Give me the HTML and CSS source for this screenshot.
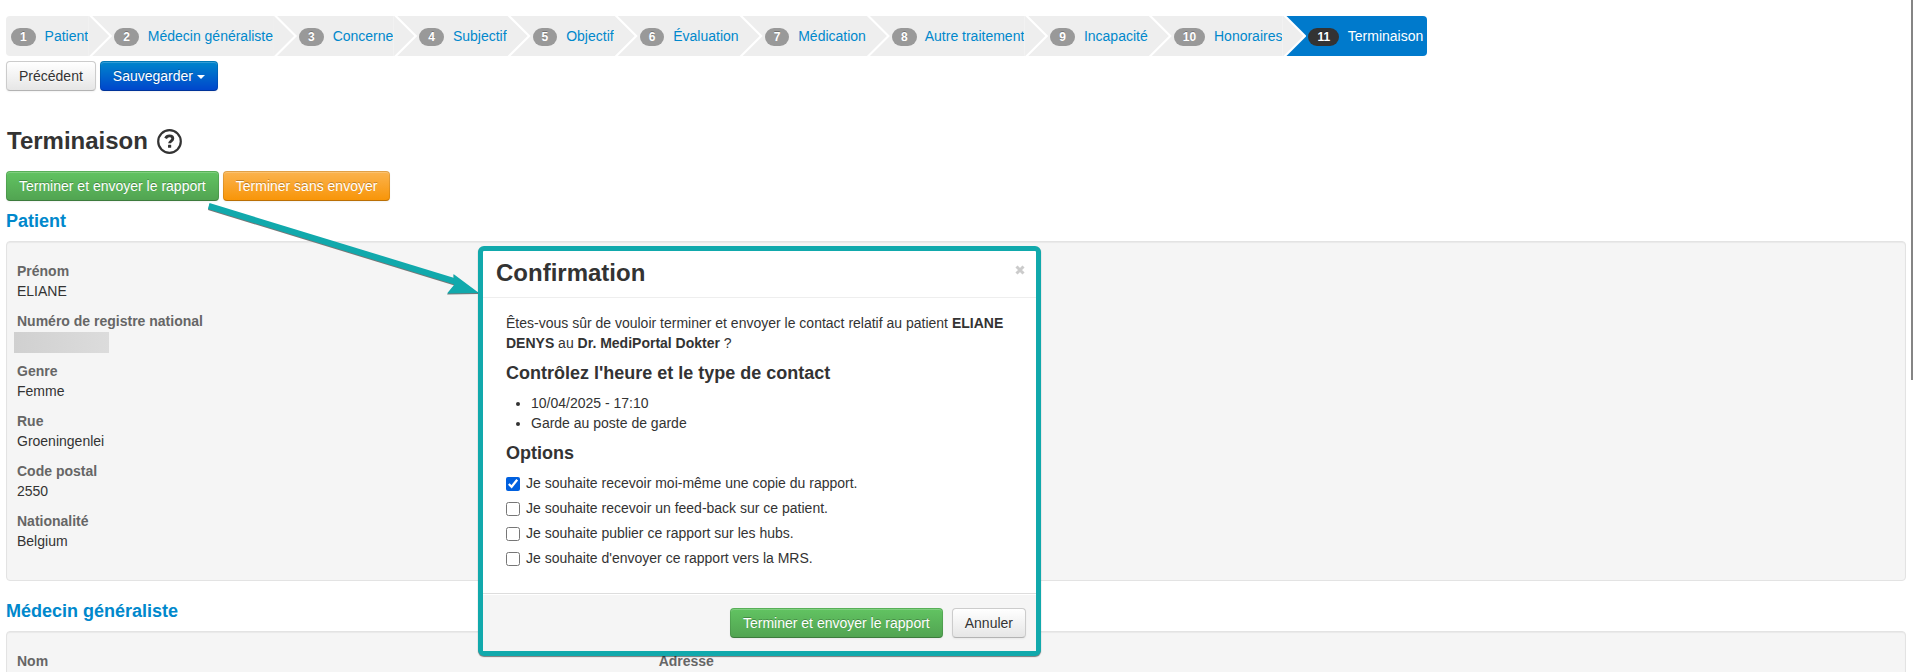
FILE: index.html
```html
<!DOCTYPE html>
<html lang="fr">
<head>
  <meta charset="UTF-8">
  <title>Terminaison</title>
  <meta name="viewport" content="width=device-width, initial-scale=1">
  <link rel="stylesheet" href="styles.css">
</head>
<body>
<div class="page">

  <ul class="steps">
    <li><span class="badge">1</span> <a href="#">Patient</a></li>
    <li><span class="badge">2</span> <a href="#">Médecin généraliste</a></li>
    <li><span class="badge">3</span> <a href="#">Concerne</a></li>
    <li><span class="badge">4</span> <a href="#">Subjectif</a></li>
    <li><span class="badge">5</span> <a href="#">Objectif</a></li>
    <li><span class="badge">6</span> <a href="#">Évaluation</a></li>
    <li><span class="badge">7</span> <a href="#">Médication</a></li>
    <li><span class="badge">8</span> <a href="#">Autre traitement</a></li>
    <li><span class="badge">9</span> <a href="#">Incapacité</a></li>
    <li><span class="badge">10</span> <a href="#">Honoraires</a></li>
    <li class="active"><span class="badge">11</span> <a href="#">Terminaison</a></li>
  </ul>

  <div class="actions">
    <button type="button" class="btn">Précédent</button>
    <button type="button" class="btn btn-primary">Sauvegarder <span class="caret"></span></button>
  </div>

  <h3 class="title">Terminaison
    <svg class="help" viewBox="0 0 25 25" width="25" height="25">
      <circle cx="12.5" cy="12.5" r="11.3" fill="none" stroke="#333" stroke-width="2.2"/>
      <path d="M8.6 9.3C9.4 7.5 10.7 6.9 12.4 6.9c2 0 3.4 1.1 3.4 2.7 0 2.5-3.2 2.4-3.2 4.7" fill="none" stroke="#333" stroke-width="2.9"/>
      <rect x="11" y="15.8" width="3.2" height="3" rx=".6" fill="#333"/>
    </svg>
  </h3>

  <div class="actions">
    <button type="button" class="btn btn-success">Terminer et envoyer le rapport</button>
    <button type="button" class="btn btn-warning">Terminer sans envoyer</button>
  </div>

  <h4 class="section">Patient</h4>
  <div class="well">
    <dl>
      <dt>Prénom</dt>
      <dd>ELIANE</dd>
      <dt>Numéro de registre national</dt>
      <dd><span class="masked"></span></dd>
      <dt>Genre</dt>
      <dd>Femme</dd>
      <dt>Rue</dt>
      <dd>Groeningenlei</dd>
      <dt>Code postal</dt>
      <dd>2550</dd>
      <dt>Nationalité</dt>
      <dd>Belgium</dd>
    </dl>
  </div>

  <h4 class="section">Médecin généraliste</h4>
  <div class="well">
    <dl>
      <dt>Nom</dt>
      <dd></dd>
    </dl>
    <dl>
      <dt>Adresse</dt>
      <dd></dd>
    </dl>
  </div>

  <svg class="arrow" width="280" height="100" viewBox="0 0 280 100">
    <g fill="#777" transform="translate(0 1)">
      <path d="M9.5 3 L256 78.5 L254.5 84.5 L8 9 Z"/>
      <path d="M253.5 74 L279 93 L247 93.5 L254 85 Z"/>
    </g>
    <g fill="#11a9ac">
      <path d="M9.5 3 L256 78.5 L254.5 84.5 L8 9 Z"/>
      <path d="M253.5 74 L279 93 L247 93.5 L254 85 Z"/>
    </g>
  </svg>

  <form class="modal">
    <div class="modal-header">
      <h3>Confirmation</h3>
      <button type="button" class="close" aria-label="Fermer">
        <svg viewBox="0 0 10 10" width="10" height="10"><path d="M1.5 1.5l7 7M8.5 1.5l-7 7" stroke="#000" stroke-width="3"/></svg>
      </button>
    </div>
    <div class="modal-body">
      <p>Êtes-vous sûr de vouloir terminer et envoyer le contact relatif au patient <strong>ELIANE DENYS</strong> au <strong>Dr. MediPortal Dokter</strong> ?</p>
      <h4>Contrôlez l'heure et le type de contact</h4>
      <ul>
        <li>10/04/2025 - 17:10</li>
        <li>Garde au poste de garde</li>
      </ul>
      <h4>Options</h4>
      <label class="checkbox"><input type="checkbox" checked> Je souhaite recevoir moi-même une copie du rapport.</label>
      <label class="checkbox"><input type="checkbox"> Je souhaite recevoir un feed-back sur ce patient.</label>
      <label class="checkbox"><input type="checkbox"> Je souhaite publier ce rapport sur les hubs.</label>
      <label class="checkbox"><input type="checkbox"> Je souhaite d'envoyer ce rapport vers la MRS.</label>
    </div>
    <div class="modal-footer">
      <button type="button" class="btn btn-success">Terminer et envoyer le rapport</button>
      <button type="button" class="btn">Annuler</button>
    </div>
  </form>

  <div class="scroll-thumb"></div>
</div>
</body>
</html>
```

FILE: styles.css
```css
* {
  box-sizing: border-box;
}
body {
  margin: 0;
  font-family: "Liberation Sans", Arial, sans-serif;
  font-size: 14px;
  line-height: 20px;
  color: #333;
  background: #fff;
}
.page {
  position: relative;
  height: 100vh;
  padding: 16px 10px 0 6px;
  overflow: hidden;
}
a {
  color: #0088cc;
  text-decoration: none;
}
h3 {
  margin: 0;
  font-size: 24px;
  line-height: 30px;
}
h4 {
  margin: 10px 0;
  font-size: 18px;
  line-height: 20px;
}

/* wizard steps */
.steps {
  display: flex;
  width: max-content;
  margin: 0 0 5px;
  padding: 0;
  list-style: none;
  line-height: 40px;
  border-radius: 4px;
  overflow: hidden;
}
.steps li {
  position: relative;
  height: 40px;
  padding: 0 1px 0 25px;
  background: #eee;
}
.steps li:first-child {
  padding-left: 5px;
}
/* both triangles start 1px inside the step so no seam shows */
.steps li::before,
.steps li::after {
  content: "";
  position: absolute;
  top: 0;
  right: -20px;
  z-index: 1;
  width: 21px;
  height: 40px;
  background: #eee;
  clip-path: polygon(0 0, 1px 0, 100% 50%, 1px 100%, 0 100%);
}
.steps li::before {
  right: -23px;
  width: 24px;
  background: #fff;
  clip-path: polygon(0 0, 4px 0, 100% 50%, 4px 100%, 0 100%);
}
.steps li.active {
  padding-right: 4px;
  background: #007acc;
}
.steps li:last-child::before,
.steps li:last-child::after {
  display: none;
}
.steps .active a {
  color: #fff;
}
.badge {
  display: inline-block;
  margin-right: 5px;
  padding: 2px 9px;
  font-size: 12px;
  font-weight: bold;
  line-height: 14px;
  color: #fff;
  text-shadow: 0 -1px 0 rgba(0, 0, 0, 0.25);
  background: #999;
  border-radius: 9px;
}
.active .badge {
  background: #333;
}

/* buttons */
.actions {
  display: flex;
  gap: 4px;
}
.btn {
  padding: 4px 12px;
  font: inherit;
  color: #333;
  text-shadow: 0 1px 1px rgba(255, 255, 255, 0.75);
  background: linear-gradient(#fff, #e6e6e6);
  border: 1px solid #ccc;
  border-bottom-color: #b3b3b3;
  border-radius: 4px;
  box-shadow: inset 0 1px 0 rgba(255, 255, 255, 0.2), 0 1px 2px rgba(0, 0, 0, 0.05);
}
.btn-primary,
.btn-success,
.btn-warning {
  color: #fff;
  text-shadow: 0 -1px 0 rgba(0, 0, 0, 0.25);
  border-color: rgba(0, 0, 0, 0.1) rgba(0, 0, 0, 0.1) rgba(0, 0, 0, 0.25);
  background-origin: border-box;
}
.btn-primary {
  background-image: linear-gradient(#0088cc, #0044cc);
}
.btn-success {
  background-image: linear-gradient(#62c462, #51a351);
}
.btn-warning {
  background-image: linear-gradient(#fbb450, #f89406);
}
.caret {
  display: inline-block;
  vertical-align: middle;
  border: 4px solid transparent;
  border-top-color: #fff;
  border-bottom: 0;
}

.title {
  display: flex;
  align-items: center;
  gap: 9px;
  margin: 30px 0 10px 1px;
  line-height: 40px;
}
.section {
  color: #0088cc;
}
.well {
  display: grid;
  grid-template-columns: repeat(3, 1fr);
  column-gap: 2.5%;
  margin-bottom: 20px;
  padding: 19px 10px;
  background: #f5f5f5;
  border: 1px solid #e3e3e3;
  border-radius: 4px;
  box-shadow: inset 0 1px 1px rgba(0, 0, 0, 0.05);
}
dl {
  margin: 0;
}
dt {
  font-weight: bold;
  color: #666;
}
dd {
  min-height: 20px;
  margin: 0 0 10px;
}
.masked {
  display: inline-block;
  width: 95px;
  height: 21px;
  margin: 1px 0 -2px -3px;
  vertical-align: top;
  background: linear-gradient(90deg, #d0d0d0, #dcdcdc);
}

/* confirmation dialog */
.modal {
  position: absolute;
  top: 246px;
  left: 478px;
  width: 563px;
  background: #fff;
  border: 5px solid #11a9ac;
  border-radius: 6px;
  box-shadow: 0 1px 1px rgba(0, 0, 0, 0.5);
}
.modal-header {
  display: flex;
  justify-content: space-between;
  align-items: center;
  padding: 7px 11px 9px 13px;
  border-bottom: 1px solid #eee;
}
.close {
  display: flex;
  padding: 0 0 6px;
  background: none;
  border: 0;
  opacity: 0.2;
}
.modal-body {
  padding: 15px 23px;
}
.modal-body p {
  margin: 0;
}
.modal-body ul {
  margin: 0 0 10px 25px;
  padding: 0;
}
.checkbox {
  display: flex;
  align-items: center;
  gap: 6px;
  margin-bottom: 5px;
}
.checkbox input {
  width: 14px;
  height: 14px;
  margin: 2px 0 0;
  accent-color: #0060df;
}
.modal-footer {
  display: flex;
  justify-content: flex-end;
  gap: 9px;
  margin-top: 5px;
  padding: 14px 10px 13px;
  background: #f5f5f5;
  border-top: 1px solid #ddd;
  box-shadow: inset 0 1px 0 #fff;
}

.arrow {
  position: absolute;
  top: 200px;
  left: 200px;
}
.scroll-thumb {
  position: absolute;
  top: 0;
  right: 3px;
  width: 2px;
  height: 380px;
  background: #858585;
}
```
